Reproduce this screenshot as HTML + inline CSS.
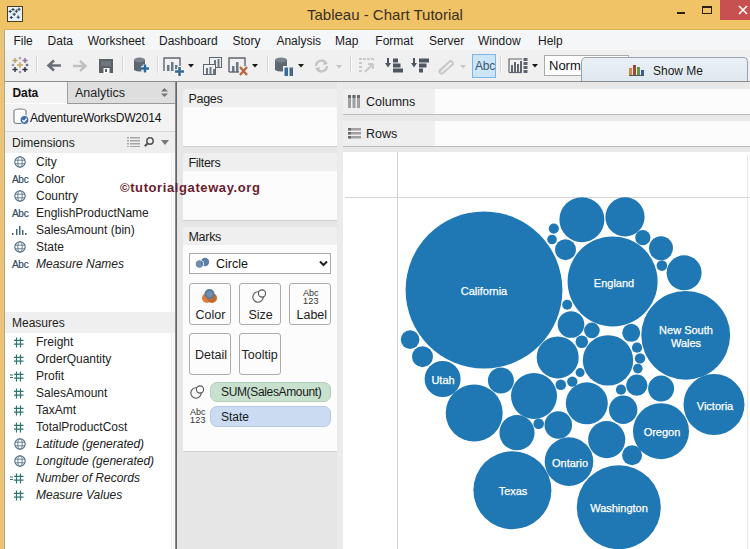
<!DOCTYPE html>
<html><head><meta charset="utf-8">
<style>
*{margin:0;padding:0;box-sizing:border-box}
html,body{width:750px;height:549px;overflow:hidden;background:#fff}
body{position:relative;font-family:"Liberation Sans",sans-serif;color:#222}
.a{position:absolute}
.t{position:absolute;white-space:pre;line-height:1}
svg{overflow:visible}
</style></head><body>
<div class="a" style="left:0px;top:0px;width:750px;height:30px;background:#EFC366"></div>
<div class="a" style="left:0px;top:29px;width:750px;height:1px;background:#D9B05A"></div>
<div class="a" style="left:0px;top:0px;width:5px;height:549px;background:#EFC366"></div>
<div class="a" style="left:0px;top:30px;width:4px;height:519px;background:#E9C47A"></div>
<div class="a" style="left:4px;top:30px;width:1px;height:519px;background:#B9A874"></div>
<svg class="a" style="left:7px;top:6px" width="16" height="16" viewBox="0 0 16 16"><rect x="0.5" y="0.5" width="15" height="15" fill="#E8F0F8" stroke="#4a3d22"/><path d="M4.4 3.5H7.6M6 1.9V5.1" stroke="#34465A" stroke-width="1.1"/><path d="M10.4 3.3H13.6M12 1.6999999999999997V4.9" stroke="#34465A" stroke-width="1.1"/><path d="M1.6 5.5H4.800000000000001M3.2 3.9V7.1" stroke="#34465A" stroke-width="1.1"/><path d="M7.800000000000001 5.2H11.0M9.4 3.6V6.800000000000001" stroke="#34465A" stroke-width="1.1"/><path d="M5.6 8.3H8.8M7.2 6.700000000000001V9.9" stroke="#34465A" stroke-width="1.1"/><path d="M2.6999999999999997 11.5H5.9M4.3 9.9V13.1" stroke="#34465A" stroke-width="1.1"/><path d="M9.6 11.2H12.799999999999999M11.2 9.6V12.799999999999999" stroke="#34465A" stroke-width="1.1"/></svg>
<div class="t" style="left:307px;top:6.5px;font-size:15px;color:#3A3020">Tableau - Chart Tutorial</div>
<div class="a" style="left:677px;top:12px;width:8px;height:2px;background:#2a1e10"></div>
<div class="a" style="left:702px;top:6px;width:10px;height:8px;border:1px solid #2a1e10;border-top-width:2px"></div>
<div class="a" style="left:720px;top:0px;width:30px;height:20px;background:#C75050"></div>
<svg class="a" style="left:738px;top:5px" width="10" height="10" viewBox="0 0 10 10"><path d="M1 1L9 9M9 1L1 9" stroke="#fff" stroke-width="1.6"/></svg>
<div class="a" style="left:5px;top:30px;width:745px;height:20px;background:#F5F6F8"></div>
<div class="a" style="left:5px;top:50px;width:745px;height:31px;background:#F0F0F0"></div>
<div class="a" style="left:5px;top:81px;width:745px;height:1px;background:#8C8C8C"></div>
<div class="t" style="left:13.4px;top:35px;font-size:12px;color:#1a1a1a">File</div>
<div class="t" style="left:47.6px;top:35px;font-size:12px;color:#1a1a1a">Data</div>
<div class="t" style="left:87.7px;top:35px;font-size:12px;color:#1a1a1a">Worksheet</div>
<div class="t" style="left:159px;top:35px;font-size:12px;color:#1a1a1a">Dashboard</div>
<div class="t" style="left:232.4px;top:35px;font-size:12px;color:#1a1a1a">Story</div>
<div class="t" style="left:276.4px;top:35px;font-size:12px;color:#1a1a1a">Analysis</div>
<div class="t" style="left:335px;top:35px;font-size:12px;color:#1a1a1a">Map</div>
<div class="t" style="left:375.3px;top:35px;font-size:12px;color:#1a1a1a">Format</div>
<div class="t" style="left:428.9px;top:35px;font-size:12px;color:#1a1a1a">Server</div>
<div class="t" style="left:477.9px;top:35px;font-size:12px;color:#1a1a1a">Window</div>
<div class="t" style="left:538px;top:35px;font-size:12px;color:#1a1a1a">Help</div>
<div class="a" style="left:36px;top:56px;width:1px;height:17px;background:#D6D6D6"></div>
<div class="a" style="left:37px;top:56px;width:1px;height:17px;background:#FAFAFA"></div>
<div class="a" style="left:122px;top:56px;width:1px;height:17px;background:#D6D6D6"></div>
<div class="a" style="left:123px;top:56px;width:1px;height:17px;background:#FAFAFA"></div>
<div class="a" style="left:157px;top:56px;width:1px;height:17px;background:#D6D6D6"></div>
<div class="a" style="left:158px;top:56px;width:1px;height:17px;background:#FAFAFA"></div>
<div class="a" style="left:267px;top:56px;width:1px;height:17px;background:#D6D6D6"></div>
<div class="a" style="left:268px;top:56px;width:1px;height:17px;background:#FAFAFA"></div>
<div class="a" style="left:350px;top:56px;width:1px;height:17px;background:#D6D6D6"></div>
<div class="a" style="left:351px;top:56px;width:1px;height:17px;background:#FAFAFA"></div>
<div class="a" style="left:500px;top:56px;width:1px;height:17px;background:#D6D6D6"></div>
<div class="a" style="left:501px;top:56px;width:1px;height:17px;background:#FAFAFA"></div>
<svg class="a" style="left:12px;top:57px" width="17" height="17" viewBox="0 0 17 17"><path d="M5 8H11M8 5V11" stroke="#C9A95A" stroke-width="1.4"/><path d="M0.5 3.5H5.5M3 1.0V6.0" stroke="#B9A060" stroke-width="1.4"/><path d="M10.5 3.5H15.5M13 1.0V6.0" stroke="#8A7090" stroke-width="1.4"/><path d="M0.5 12.5H5.5M3 10.0V15.0" stroke="#3A3550" stroke-width="1.4"/><path d="M10.5 12.5H15.5M13 10.0V15.0" stroke="#2A2A3A" stroke-width="1.4"/><path d="M6.7 1.2H9.3M8 -0.10000000000000009V2.5" stroke="#8A8AA0" stroke-width="1"/><path d="M-0.30000000000000004 8H2.3M1 6.7V9.3" stroke="#8080A0" stroke-width="1"/><path d="M13.7 8H16.3M15 6.7V9.3" stroke="#404860" stroke-width="1"/><path d="M6.7 15H9.3M8 13.7V16.3" stroke="#8080A0" stroke-width="1"/></svg>
<svg class="a" style="left:46px;top:59px" width="16" height="13" viewBox="0 0 16 13"><path d="M15 6.5H3M8 1.5L2.5 6.5L8 11.5" fill="none" stroke="#6B7079" stroke-width="2.6"/></svg>
<svg class="a" style="left:72px;top:60px" width="16" height="12" viewBox="0 0 16 12"><path d="M1 6H13M8 1L13.5 6L8 11" fill="none" stroke="#C0C0C0" stroke-width="2.4"/></svg>
<svg class="a" style="left:99px;top:59px" width="14" height="14" viewBox="0 0 14 14"><rect x="0" y="0" width="14" height="14" fill="#5A6169"/><rect x="2" y="2" width="10" height="5" fill="#6F767D"/><rect x="4.5" y="9" width="6" height="5" fill="#fff"/><rect x="6" y="10" width="2" height="3" fill="#5A6169"/></svg>
<svg class="a" style="left:134px;top:57px" width="16" height="19" viewBox="0 0 16 19"><path d="M0 3V13Q5.5 16 11 13V3Z" fill="#5E6873"/><ellipse cx="5.5" cy="3" rx="5.5" ry="2.5" fill="#7A838C"/><path d="M7 11.5H15M11 7.5V15.5" stroke="#fff" stroke-width="4.5"/><path d="M7 11.5H15M11 7.5V15.5" stroke="#2A6A9A" stroke-width="2.6"/></svg>
<svg class="a" style="left:163px;top:57px" width="22" height="19" viewBox="0 0 22 19"><path d="M1 14V1H17V9" fill="none" stroke="#5F6670" stroke-width="1.4"/><rect x="4" y="8" width="2.5" height="6" fill="#6A7785"/><rect x="8" y="5" width="2.5" height="9" fill="#6A7785"/><rect x="12" y="8" width="2.5" height="6" fill="#6A7785"/><path d="M12 14.5H21M16.5 10V19" stroke="#fff" stroke-width="4.5"/><path d="M12 14.5H21M16.5 10V19" stroke="#3A6A98" stroke-width="2.6"/></svg>
<svg class="a" style="left:188px;top:64px" width="6" height="4" viewBox="0 0 6 4"><path d="M0 0H6L3 3.5Z" fill="#1a1a1a"/></svg>
<svg class="a" style="left:203px;top:57px" width="19" height="19" viewBox="0 0 19 19"><rect x="6.5" y="0.5" width="12" height="10" fill="#F0F0F0" stroke="#5F6670"/><rect x="11" y="3" width="2" height="7" fill="#6A7785"/><rect x="14.5" y="2" width="2" height="8" fill="#6A7785"/><rect x="0.5" y="7.5" width="12" height="10" fill="#F0F0F0" stroke="#5F6670"/><rect x="3" y="11" width="2" height="6" fill="#6A7785"/><rect x="6.5" y="10" width="2" height="7" fill="#6A7785"/><rect x="10" y="12" width="2" height="5" fill="#6A7785"/></svg>
<svg class="a" style="left:228px;top:57px" width="20" height="20" viewBox="0 0 20 20"><path d="M1 15V1H17V9" fill="none" stroke="#5F6670" stroke-width="1.4"/><rect x="4" y="9" width="2.5" height="6" fill="#6A7785"/><rect x="8" y="5" width="2.5" height="10" fill="#6A7785"/><path d="M1 15H11" stroke="#5F6670" stroke-width="1.4"/><path d="M12 10L19 18M19 10L12 18" stroke="#B8643A" stroke-width="2.2"/></svg>
<svg class="a" style="left:252px;top:64px" width="6" height="4" viewBox="0 0 6 4"><path d="M0 0H6L3 3.5Z" fill="#1a1a1a"/></svg>
<svg class="a" style="left:275px;top:57px" width="24" height="20" viewBox="0 0 24 20"><path d="M0 3V13Q6 16 12 13V3Z" fill="#5E6873"/><ellipse cx="6" cy="3" rx="6" ry="2.6" fill="#7A838C"/><rect x="8" y="9" width="10" height="11" fill="#F0F0F0"/><rect x="9.5" y="10.5" width="3.5" height="8.5" fill="#3A6A98"/><rect x="14.5" y="10.5" width="3.5" height="8.5" fill="#3A6A98"/></svg>
<svg class="a" style="left:298px;top:64px" width="6" height="4" viewBox="0 0 6 4"><path d="M0 0H6L3 3.5Z" fill="#1a1a1a"/></svg>
<svg class="a" style="left:313px;top:59px" width="17" height="14" viewBox="0 0 17 14"><path d="M3 7A5.5 5.5 0 0 1 13 4M14 7A5.5 5.5 0 0 1 4 10" fill="none" stroke="#C4C4C4" stroke-width="2.5"/><path d="M11 1L15 5L10 6Z M6 13L2 9L7 8Z" fill="#C4C4C4"/></svg>
<svg class="a" style="left:336px;top:65px" width="6" height="4" viewBox="0 0 6 4"><path d="M0 0H6L3 3.5Z" fill="#C4C4C4"/></svg>
<svg class="a" style="left:359px;top:58px" width="17" height="17" viewBox="0 0 17 17"><g fill="#CACACA"><rect x="0" y="0" width="3" height="2"/><rect x="4" y="0" width="3" height="2"/><rect x="8" y="0" width="3" height="2"/><rect x="12" y="0" width="3" height="2"/><rect x="0" y="4" width="3" height="2"/><rect x="0" y="8" width="3" height="2"/><rect x="0" y="12" width="3" height="2"/></g><path d="M6 14L14 6M14 6V11M14 6H9" fill="none" stroke="#CACACA" stroke-width="2"/></svg>
<svg class="a" style="left:385px;top:58px" width="19" height="16" viewBox="0 0 19 16"><path d="M3 0V6" stroke="#4E565F" stroke-width="2"/><path d="M0 5L3 9.5L6 5Z" fill="#4E565F"/><rect x="8" y="0.5" width="5" height="4" fill="#4E565F"/><rect x="8" y="5.5" width="7.5" height="4" fill="#4E565F"/><rect x="8" y="10.5" width="10" height="4" fill="#4E565F"/></svg>
<svg class="a" style="left:411px;top:58px" width="19" height="16" viewBox="0 0 19 16"><path d="M3 0V6" stroke="#4E565F" stroke-width="2"/><path d="M0 5L3 9.5L6 5Z" fill="#4E565F"/><rect x="8" y="0.5" width="10" height="4" fill="#4E565F"/><rect x="8" y="5.5" width="7.5" height="4" fill="#4E565F"/><rect x="8" y="10.5" width="4" height="4" fill="#4E565F"/></svg>
<svg class="a" style="left:436px;top:58px" width="19" height="16" viewBox="0 0 19 16"><path d="M3 14L14 3A3 3 0 0 1 17 6L7 15A2 2 0 0 1 4 12L13 4" fill="none" stroke="#C8C8C8" stroke-width="1.8"/></svg>
<svg class="a" style="left:460px;top:65px" width="6" height="4" viewBox="0 0 6 4"><path d="M0 0H6L3 3.5Z" fill="#C8C8C8"/></svg>
<div class="a" style="left:472px;top:54px;width:24px;height:24px;background:#CDE6F7;border:1px solid #7DB5E6"></div>
<div class="t" style="left:475px;top:60px;font-size:12px;color:#3B5573;letter-spacing:-0.2px">Abc</div>
<svg class="a" style="left:508px;top:58px" width="21" height="15" viewBox="0 0 21 15"><path d="M1 14.5V1H14" fill="none" stroke="#5F6670" stroke-width="1.2"/><path d="M1 14.5H14" stroke="#5F6670" stroke-width="1.2"/><rect x="3" y="7" width="2" height="7" fill="#5F6670"/><rect x="6" y="4" width="2" height="10" fill="#5F6670"/><rect x="9" y="6" width="2" height="8" fill="#5F6670"/><rect x="12" y="3" width="2" height="11" fill="#5F6670"/><rect x="15.5" y="0" width="4" height="3" fill="#5F6670"/><rect x="15.5" y="4" width="4" height="3" fill="#5F6670"/><rect x="15.5" y="8" width="4" height="3" fill="#5F6670"/><rect x="15.5" y="12" width="4" height="3" fill="#5F6670"/></svg>
<svg class="a" style="left:532px;top:64px" width="6" height="4" viewBox="0 0 6 4"><path d="M0 0H6L3 3.5Z" fill="#1a1a1a"/></svg>
<div class="a" style="left:544px;top:55px;width:85px;height:21px;background:#fff;border:1px solid #ABABAB"></div>
<div class="t" style="left:549px;top:59px;font-size:13px;color:#111">Normal</div>
<div class="a" style="left:581px;top:57px;width:167px;height:24px;background:linear-gradient(#EAF0F6,#DFE7EF);border:1px solid #9AA3AD;border-bottom:none;border-radius:5px 5px 0 0"></div>
<svg class="a" style="left:629px;top:64px" width="15" height="12" viewBox="0 0 15 12"><rect x="0" y="4" width="3" height="8" fill="#D08A3A"/><rect x="4" y="1" width="3" height="11" fill="#A0463A"/><rect x="8" y="3" width="3" height="9" fill="#5E9A3E"/><rect x="12" y="6" width="3" height="6" fill="#3A5A9A"/><rect x="0" y="11" width="15" height="1" fill="#555"/></svg>
<div class="t" style="left:653px;top:64.5px;font-size:12px;color:#1a1a1a">Show Me</div>
<div class="a" style="left:5px;top:82px;width:171px;height:467px;background:#fff"></div>
<div class="a" style="left:171px;top:82px;width:4px;height:467px;background:#F8F8F8"></div>
<div class="a" style="left:171px;top:103px;width:1px;height:446px;background:#EFEFEF"></div>
<div class="a" style="left:5px;top:82px;width:62px;height:21px;background:#F3F3F3"></div>
<div class="a" style="left:67px;top:82px;width:108px;height:22px;background:#DEDEDE;border-left:1px solid #A0A0A0;border-bottom:1px solid #9A9A9A"></div>
<div class="t" style="left:12.5px;top:86.5px;font-size:12px;font-weight:bold;color:#111;letter-spacing:-0.1px">Data</div>
<div class="t" style="left:75px;top:87px;font-size:12.5px;color:#222">Analytics</div>
<svg class="a" style="left:161px;top:88px" width="7" height="9" viewBox="0 0 7 9"><path d="M0 3.5L3.5 0L7 3.5ZM0 5.5L3.5 9L7 5.5Z" fill="#777"/></svg>
<div class="a" style="left:5px;top:104px;width:170px;height:27px;background:#F3F3F3"></div>
<div class="a" style="left:5px;top:131px;width:170px;height:1px;background:#D8D8D8"></div>
<svg class="a" style="left:13px;top:108px" width="17" height="17" viewBox="0 0 17 17"><path d="M1 3Q1 1 7 1Q13 1 13 3V14Q13 15.5 7 15.5Q1 15.5 1 14Z" fill="#fff" stroke="#707880" stroke-width="1.1"/><circle cx="11.5" cy="12" r="4.5" fill="#3D6DAB" stroke="#fff" stroke-width="1"/><path d="M9.3 12L11 13.7L13.8 10.5" fill="none" stroke="#fff" stroke-width="1.3"/></svg>
<div class="t" style="left:30px;top:112px;font-size:12px;color:#111;letter-spacing:-0.2px">AdventureWorksDW2014</div>
<div class="a" style="left:5px;top:132px;width:170px;height:21px;background:#EFEFEF"></div>
<div class="t" style="left:12px;top:137px;font-size:12px;color:#222">Dimensions</div>
<svg class="a" style="left:127px;top:137px" width="13" height="10" viewBox="0 0 13 10"><g fill="#A5A5A5"><rect x="0" y="0" width="2" height="1.5"/><rect x="3" y="0" width="10" height="1.5"/><rect x="0" y="3" width="2" height="1.5"/><rect x="3" y="3" width="10" height="1.5"/><rect x="0" y="6" width="2" height="1.5"/><rect x="3" y="6" width="10" height="1.5"/><rect x="0" y="9" width="2" height="1"/><rect x="3" y="9" width="10" height="1"/></g></svg>
<svg class="a" style="left:144px;top:137px" width="10" height="10" viewBox="0 0 10 10"><circle cx="6" cy="4" r="3.2" fill="none" stroke="#555" stroke-width="1.5"/><path d="M4 6L0.8 9.2" stroke="#555" stroke-width="2"/></svg>
<svg class="a" style="left:161px;top:140px" width="8" height="5" viewBox="0 0 8 5"><path d="M0 0H8L4 5Z" fill="#777"/></svg>
<svg class="a" style="left:13.5px;top:156px" width="12" height="12" viewBox="0 0 12 12"><circle cx="6" cy="6" r="5.2" fill="#fff" stroke="#4A6A80" stroke-width="1.1"/><path d="M1.2 4.2H10.8M1.2 7.8H10.8" stroke="#4A6A80" stroke-width="0.8"/><ellipse cx="6" cy="6" rx="2.2" ry="5.2" fill="none" stroke="#4A6A80" stroke-width="0.8"/></svg>
<div class="t" style="left:36px;top:155.5px;font-size:12px;color:#222">City</div>
<div class="t" style="left:12px;top:174.5px;font-size:10px;color:#2F4A62;letter-spacing:-0.3px;-webkit-text-stroke:0.2px #2F4A62">Abc</div>
<div class="t" style="left:36px;top:172.5px;font-size:12px;color:#222">Color</div>
<svg class="a" style="left:13.5px;top:190px" width="12" height="12" viewBox="0 0 12 12"><circle cx="6" cy="6" r="5.2" fill="#fff" stroke="#4A6A80" stroke-width="1.1"/><path d="M1.2 4.2H10.8M1.2 7.8H10.8" stroke="#4A6A80" stroke-width="0.8"/><ellipse cx="6" cy="6" rx="2.2" ry="5.2" fill="none" stroke="#4A6A80" stroke-width="0.8"/></svg>
<div class="t" style="left:36px;top:189.5px;font-size:12px;color:#222">Country</div>
<div class="t" style="left:12px;top:208.5px;font-size:10px;color:#2F4A62;letter-spacing:-0.3px;-webkit-text-stroke:0.2px #2F4A62">Abc</div>
<div class="t" style="left:36px;top:206.5px;font-size:12px;color:#222">EnglishProductName</div>
<svg class="a" style="left:12px;top:225px" width="14" height="10" viewBox="0 0 14 10"><g fill="#48687E"><rect x="0" y="8" width="1.5" height="2"/><rect x="4" y="4" width="1.5" height="6"/><rect x="7" y="1" width="1.5" height="9"/><rect x="10" y="5" width="1.5" height="5"/><rect x="13" y="8" width="1.5" height="2"/></g></svg>
<div class="t" style="left:36px;top:223.5px;font-size:12px;color:#222">SalesAmount (bin)</div>
<svg class="a" style="left:13.5px;top:241px" width="12" height="12" viewBox="0 0 12 12"><circle cx="6" cy="6" r="5.2" fill="#fff" stroke="#4A6A80" stroke-width="1.1"/><path d="M1.2 4.2H10.8M1.2 7.8H10.8" stroke="#4A6A80" stroke-width="0.8"/><ellipse cx="6" cy="6" rx="2.2" ry="5.2" fill="none" stroke="#4A6A80" stroke-width="0.8"/></svg>
<div class="t" style="left:36px;top:240.5px;font-size:12px;color:#222">State</div>
<div class="t" style="left:12px;top:259.5px;font-size:10px;color:#2F4A62;letter-spacing:-0.3px;-webkit-text-stroke:0.2px #2F4A62">Abc</div>
<div class="t" style="left:36px;top:257.5px;font-size:12px;color:#222;font-style:italic">Measure Names</div>
<div class="a" style="left:5px;top:312px;width:170px;height:21px;background:#EFEFEF"></div>
<div class="t" style="left:12px;top:317px;font-size:12px;color:#222">Measures</div>
<svg class="a" style="left:13px;top:336.5px" width="14" height="11" viewBox="0 0 14 11"><path d="M3.5 0.5V10.5M7.5 0.5V10.5M1 3.3H10.5M1 7.2H10.5" stroke="#2E7470" stroke-width="1.2"/></svg>
<div class="t" style="left:36px;top:335.5px;font-size:12px;color:#222">Freight</div>
<svg class="a" style="left:13px;top:353.5px" width="14" height="11" viewBox="0 0 14 11"><path d="M3.5 0.5V10.5M7.5 0.5V10.5M1 3.3H10.5M1 7.2H10.5" stroke="#2E7470" stroke-width="1.2"/></svg>
<div class="t" style="left:36px;top:352.5px;font-size:12px;color:#222">OrderQuantity</div>
<svg class="a" style="left:13px;top:370.5px" width="14" height="11" viewBox="0 0 14 11"><path d="M3.5 0.5V10.5M7.5 0.5V10.5M1 3.3H10.5M1 7.2H10.5" stroke="#2E7470" stroke-width="1.2"/><path d="M-3 4H0M-3 6.5H0" stroke="#2E7470" stroke-width="1"/></svg>
<div class="t" style="left:36px;top:369.5px;font-size:12px;color:#222">Profit</div>
<svg class="a" style="left:13px;top:387.5px" width="14" height="11" viewBox="0 0 14 11"><path d="M3.5 0.5V10.5M7.5 0.5V10.5M1 3.3H10.5M1 7.2H10.5" stroke="#2E7470" stroke-width="1.2"/></svg>
<div class="t" style="left:36px;top:386.5px;font-size:12px;color:#222">SalesAmount</div>
<svg class="a" style="left:13px;top:404.5px" width="14" height="11" viewBox="0 0 14 11"><path d="M3.5 0.5V10.5M7.5 0.5V10.5M1 3.3H10.5M1 7.2H10.5" stroke="#2E7470" stroke-width="1.2"/></svg>
<div class="t" style="left:36px;top:403.5px;font-size:12px;color:#222">TaxAmt</div>
<svg class="a" style="left:13px;top:421.5px" width="14" height="11" viewBox="0 0 14 11"><path d="M3.5 0.5V10.5M7.5 0.5V10.5M1 3.3H10.5M1 7.2H10.5" stroke="#2E7470" stroke-width="1.2"/></svg>
<div class="t" style="left:36px;top:420.5px;font-size:12px;color:#222">TotalProductCost</div>
<svg class="a" style="left:13.5px;top:438px" width="12" height="12" viewBox="0 0 12 12"><circle cx="6" cy="6" r="5.2" fill="#fff" stroke="#4A6A80" stroke-width="1.1"/><path d="M1.2 4.2H10.8M1.2 7.8H10.8" stroke="#4A6A80" stroke-width="0.8"/><ellipse cx="6" cy="6" rx="2.2" ry="5.2" fill="none" stroke="#4A6A80" stroke-width="0.8"/></svg>
<div class="t" style="left:36px;top:437.5px;font-size:12px;color:#222;font-style:italic">Latitude (generated)</div>
<svg class="a" style="left:13.5px;top:455px" width="12" height="12" viewBox="0 0 12 12"><circle cx="6" cy="6" r="5.2" fill="#fff" stroke="#4A6A80" stroke-width="1.1"/><path d="M1.2 4.2H10.8M1.2 7.8H10.8" stroke="#4A6A80" stroke-width="0.8"/><ellipse cx="6" cy="6" rx="2.2" ry="5.2" fill="none" stroke="#4A6A80" stroke-width="0.8"/></svg>
<div class="t" style="left:36px;top:454.5px;font-size:12px;color:#222;font-style:italic">Longitude (generated)</div>
<svg class="a" style="left:13px;top:472.5px" width="14" height="11" viewBox="0 0 14 11"><path d="M3.5 0.5V10.5M7.5 0.5V10.5M1 3.3H10.5M1 7.2H10.5" stroke="#2E7470" stroke-width="1.2"/><path d="M-3 4H0M-3 6.5H0" stroke="#2E7470" stroke-width="1"/></svg>
<div class="t" style="left:36px;top:471.5px;font-size:12px;color:#222;font-style:italic">Number of Records</div>
<svg class="a" style="left:13px;top:489.5px" width="14" height="11" viewBox="0 0 14 11"><path d="M3.5 0.5V10.5M7.5 0.5V10.5M1 3.3H10.5M1 7.2H10.5" stroke="#2E7470" stroke-width="1.2"/></svg>
<div class="t" style="left:36px;top:488.5px;font-size:12px;color:#222;font-style:italic">Measure Values</div>
<div class="a" style="left:175px;top:82px;width:1px;height:467px;background:#8A8A8A"></div>
<div class="a" style="left:176px;top:82px;width:1px;height:467px;background:#666"></div>
<div class="a" style="left:177px;top:82px;width:166px;height:467px;background:#E6E6E6"></div>
<div class="a" style="left:337px;top:82px;width:6px;height:467px;background:#EBEBEB"></div>
<div class="a" style="left:183px;top:89px;width:154px;height:57px;background:#FCFCFD;border-radius:4px 4px 0 0;box-shadow:0 1px 0 #CFCFCF"></div>
<div class="a" style="left:183px;top:89px;width:154px;height:18px;background:#EFEFEF;border-radius:4px 4px 0 0"></div>
<div class="t" style="left:188.5px;top:92.5px;font-size:12.5px;color:#1a1a1a;letter-spacing:-0.3px">Pages</div>
<div class="a" style="left:183px;top:153px;width:154px;height:67px;background:#FCFCFD;border-radius:4px 4px 0 0;box-shadow:0 1px 0 #CFCFCF"></div>
<div class="a" style="left:183px;top:153px;width:154px;height:18px;background:#EFEFEF;border-radius:4px 4px 0 0"></div>
<div class="t" style="left:188.5px;top:156.5px;font-size:12.5px;color:#1a1a1a;letter-spacing:-0.3px">Filters</div>
<div class="a" style="left:183px;top:227px;width:154px;height:224px;background:#FCFCFD;border-radius:4px 4px 0 0;box-shadow:0 1px 0 #CFCFCF"></div>
<div class="a" style="left:183px;top:227px;width:154px;height:18px;background:#EFEFEF;border-radius:4px 4px 0 0"></div>
<div class="t" style="left:188.5px;top:230.5px;font-size:12.5px;color:#1a1a1a;letter-spacing:-0.3px">Marks</div>
<div class="a" style="left:189px;top:253px;width:142px;height:21px;background:#fff;border:1px solid #A9A9A9"></div>
<svg class="a" style="left:195px;top:257px" width="15" height="12" viewBox="0 0 15 12"><circle cx="4.5" cy="7" r="4.2" fill="#6E8EB0"/><circle cx="10" cy="5" r="4.2" fill="#5A7EA5"/><circle cx="4.5" cy="7" r="4.2" fill="none" stroke="#fff" stroke-width="0.8"/></svg>
<div class="t" style="left:216px;top:258px;font-size:12.5px;color:#111">Circle</div>
<svg class="a" style="left:318.5px;top:259.5px" width="9" height="7" viewBox="0 0 9 7"><path d="M1 1.5L4.5 5L8 1.5" fill="none" stroke="#222" stroke-width="2"/></svg>
<div class="a" style="left:189px;top:283px;width:42px;height:42px;background:#FCFCFC;border:1px solid #ACACAC;border-radius:3px"></div>
<div class="t" style="left:195.5px;top:309px;font-size:12.5px;color:#222">Color</div>
<div class="a" style="left:239px;top:283px;width:42px;height:42px;background:#FCFCFC;border:1px solid #ACACAC;border-radius:3px"></div>
<div class="t" style="left:248.5px;top:309px;font-size:12.5px;color:#222">Size</div>
<div class="a" style="left:289px;top:283px;width:42px;height:42px;background:#FCFCFC;border:1px solid #ACACAC;border-radius:3px"></div>
<div class="t" style="left:296.5px;top:309px;font-size:12.5px;color:#222">Label</div>
<div class="a" style="left:189px;top:333px;width:42px;height:42px;background:#FCFCFC;border:1px solid #ACACAC;border-radius:3px"></div>
<div class="t" style="left:195px;top:348.5px;font-size:12.5px;color:#222">Detail</div>
<div class="a" style="left:239px;top:333px;width:42px;height:42px;background:#FCFCFC;border:1px solid #ACACAC;border-radius:3px"></div>
<div class="t" style="left:241.5px;top:348.5px;font-size:12.5px;color:#222">Tooltip</div>
<svg class="a" style="left:201px;top:288px" width="17" height="15" viewBox="0 0 17 15"><circle cx="6" cy="10" r="5" fill="#E07B39"/><circle cx="11" cy="10" r="5" fill="#C26A30"/><circle cx="8.5" cy="6" r="5" fill="#5D7A99"/><circle cx="8.5" cy="6" r="3" fill="#7090B0"/></svg>
<svg class="a" style="left:252px;top:289px" width="15" height="14" viewBox="0 0 15 14"><circle cx="6" cy="8" r="5.2" fill="none" stroke="#555" stroke-width="1.1"/><circle cx="10" cy="4.5" r="3.6" fill="#FCFCFC" stroke="#555" stroke-width="1.1"/></svg>
<div class="t" style="left:303px;top:289px;font-size:9px;color:#333">Abc</div>
<div class="t" style="left:303px;top:297px;font-size:9px;color:#333;letter-spacing:0.2px">123</div>
<svg class="a" style="left:190px;top:385px" width="15" height="14" viewBox="0 0 15 14"><circle cx="6" cy="8" r="5.2" fill="none" stroke="#555" stroke-width="1.1"/><circle cx="10" cy="4.5" r="3.6" fill="#FCFCFC" stroke="#555" stroke-width="1.1"/></svg>
<div class="a" style="left:210px;top:382px;width:121px;height:20px;background:#C8E1CF;border:1px solid #B3CFBB;border-radius:7px"></div>
<div class="t" style="left:221px;top:386px;font-size:12px;color:#1a1a1a;letter-spacing:-0.35px">SUM(SalesAmount)</div>
<div class="t" style="left:190px;top:408px;font-size:9px;color:#333">Abc</div>
<div class="t" style="left:190px;top:416px;font-size:9px;color:#333;letter-spacing:0.2px">123</div>
<div class="a" style="left:210px;top:406px;width:121px;height:21px;background:#CADBF2;border:1px solid #B5C8E4;border-radius:7px"></div>
<div class="t" style="left:221px;top:411px;font-size:12px;color:#1a1a1a">State</div>
<div class="a" style="left:343px;top:82px;width:407px;height:70px;background:#E8E8E8"></div>
<div class="a" style="left:343px;top:89px;width:407px;height:25px;background:#FCFCFD;box-shadow:0 1px 0 #BDBDBD"></div>
<div class="a" style="left:343px;top:89px;width:92px;height:25px;background:#EFEFEF"></div>
<div class="t" style="left:366px;top:96.2px;font-size:12.5px;color:#1a1a1a">Columns</div>
<div class="a" style="left:343px;top:121px;width:407px;height:25px;background:#FCFCFD;box-shadow:0 1px 0 #BDBDBD"></div>
<div class="a" style="left:343px;top:121px;width:92px;height:25px;background:#EFEFEF"></div>
<div class="t" style="left:366px;top:128.2px;font-size:12.5px;color:#1a1a1a">Rows</div>
<svg class="a" style="left:348px;top:95px" width="12" height="13" viewBox="0 0 12 13"><g fill="#A0A0A0"><rect x="0" y="0" width="3" height="13"/><rect x="4.5" y="0" width="3" height="13"/><rect x="9" y="0" width="3" height="13"/></g><g fill="#6A6A6A"><rect x="0" y="0" width="3" height="3"/><rect x="4.5" y="0" width="3" height="3"/><rect x="9" y="0" width="3" height="3"/></g></svg>
<svg class="a" style="left:348px;top:128px" width="13" height="11" viewBox="0 0 13 11"><g fill="#A0A0A0"><rect x="0" y="0" width="13" height="2.5"/><rect x="0" y="4" width="13" height="2.5"/><rect x="0" y="8" width="13" height="2.5"/></g><g fill="#6A6A6A"><rect x="0" y="0" width="3" height="2.5"/><rect x="0" y="4" width="3" height="2.5"/><rect x="0" y="8" width="3" height="2.5"/></g></svg>
<div class="a" style="left:343px;top:152px;width:407px;height:397px;background:#fff"></div>
<div class="a" style="left:397px;top:152px;width:1px;height:397px;background:#D4D4D4"></div>
<div class="a" style="left:345px;top:197px;width:405px;height:1px;background:#D4D4D4"></div>
<div class="a" style="left:747px;top:155px;width:1px;height:394px;background:#E6E6E6"></div>
<svg class="a" style="left:343px;top:152px" width="407" height="397" viewBox="0 0 407 397"><g fill="#1F77B4"><circle cx="141" cy="138" r="78.4"/><circle cx="269.6" cy="129.39999999999998" r="45"/><circle cx="342.70000000000005" cy="183.3" r="44.4"/><circle cx="371" cy="252.5" r="30.5"/><circle cx="318" cy="279.2" r="28"/><circle cx="275.79999999999995" cy="355.2" r="42"/><circle cx="169.39999999999998" cy="338.2" r="39"/><circle cx="226" cy="309.6" r="24.3"/><circle cx="99.60000000000002" cy="227" r="18"/><circle cx="238.89999999999998" cy="67.69999999999999" r="22.5"/><circle cx="282" cy="64.9" r="19.6"/><circle cx="341.1" cy="120.80000000000001" r="17.5"/><circle cx="318" cy="96.30000000000001" r="12"/><circle cx="299.79999999999995" cy="85.69999999999999" r="7.6"/><circle cx="318.9" cy="113.60000000000002" r="5.3"/><circle cx="210.79999999999995" cy="76.6" r="5.1"/><circle cx="209" cy="87.5" r="4.8"/><circle cx="222.5" cy="97.69999999999999" r="10.5"/><circle cx="228" cy="172.5" r="13.3"/><circle cx="224.20000000000005" cy="152.7" r="5"/><circle cx="248.89999999999998" cy="178.39999999999998" r="7.8"/><circle cx="238.79999999999995" cy="189.8" r="6.3"/><circle cx="214.70000000000005" cy="205.39999999999998" r="21"/><circle cx="265" cy="208.39999999999998" r="25.2"/><circle cx="288.20000000000005" cy="180.8" r="9"/><circle cx="294" cy="195.7" r="5.1"/><circle cx="297" cy="206.39999999999998" r="5.2"/><circle cx="294.79999999999995" cy="216.60000000000002" r="4.8"/><circle cx="237.10000000000002" cy="220.60000000000002" r="4.5"/><circle cx="229.29999999999995" cy="229.60000000000002" r="5.2"/><circle cx="217.79999999999995" cy="232.7" r="5.3"/><circle cx="191" cy="244" r="23"/><circle cx="243.79999999999995" cy="251.3" r="21"/><circle cx="278" cy="237.7" r="5.1"/><circle cx="293.79999999999995" cy="233.2" r="10.6"/><circle cx="318.1" cy="236.60000000000002" r="13"/><circle cx="280.20000000000005" cy="257.7" r="14.2"/><circle cx="195.70000000000005" cy="271.7" r="5.3"/><circle cx="215.29999999999995" cy="273" r="13.8"/><circle cx="263.70000000000005" cy="287.6" r="18.6"/><circle cx="289.1" cy="303.3" r="10"/><circle cx="174" cy="280.7" r="17.6"/><circle cx="131.2" cy="261" r="28.5"/><circle cx="157.89999999999998" cy="228.5" r="13"/><circle cx="67.10000000000002" cy="187.60000000000002" r="9.3"/><circle cx="79.5" cy="204.7" r="10.5"/></g><g fill="#fff" stroke="#fff" stroke-width="0.25" font-family="Liberation Sans" font-size="11" text-anchor="middle"><text x="141" y="143">California</text><text x="271" y="135">England</text><text x="343" y="182">New South</text><text x="343" y="195">Wales</text><text x="100" y="232">Utah</text><text x="372" y="258">Victoria</text><text x="319" y="284">Oregon</text><text x="170" y="343">Texas</text><text x="227" y="315">Ontario</text><text x="276" y="360">Washington</text></g></svg>
<div class="t" style="left:120px;top:180.5px;font-size:13px;font-weight:bold;color:#6A1C2C;letter-spacing:0.6px">©tutorialgateway.org</div>
</body></html>
